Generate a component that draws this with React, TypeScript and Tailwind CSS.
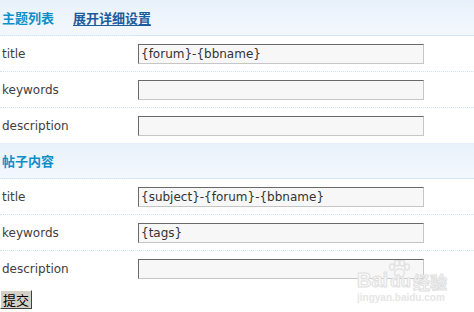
import React from "react";

const labelFont = { fontFamily: '"DejaVu Sans", Verdana, sans-serif' };
const cjk = { fontFamily: '"Noto Sans CJK SC", sans-serif' };

function Header({ children }: { children: React.ReactNode }) {
  return (
    <div className="flex h-[36px]">
      <div className="w-[133px] shrink-0 h-full bg-gradient-to-b from-[#e8f1fb] to-[#f3f8fd] border-b border-dotted border-[#cfe2f1] relative">
        <div className="absolute left-[2px] top-0 h-[35px] flex items-center whitespace-nowrap">{children}</div>
      </div>
      <div className="flex-1 h-full bg-gradient-to-b from-[#e8f1fb] to-[#f3f8fd] border-b border-solid border-[#d3e5f4]" />
    </div>
  );
}

function Row({ label, value, last }: { label: string; value?: string; last?: boolean }) {
  return (
    <div className={`flex items-center h-[36px] ${last ? "" : "border-b border-dotted border-[#cfe3f1]"}`}>
      <div className="w-[138px] shrink-0 pl-[2px] text-[12px] text-[#404040]" style={labelFont}>{label}</div>
      <div className="w-[286px] h-[20px] bg-[#f7f7f7] border-t border-l border-[#6a6a6a] border-r-[#c6c6c6] border-b-[#c6c6c6] border-r border-b flex items-center pl-[2px] text-[12px] text-[#333] whitespace-nowrap overflow-hidden" style={labelFont}>
        {value}
      </div>
    </div>
  );
}

export default function App() {
  return (
    <div className="w-[474px] h-[312px] bg-white relative overflow-hidden">
      <Header>
        <span className="text-[13px] font-bold text-[#0d90c8]" style={cjk}>主题列表</span>
        <span className="ml-[19px] text-[13px] font-bold text-[#1d5c9c] underline underline-offset-[2px]" style={cjk}>展开详细设置</span>
      </Header>
      <Row label="title" value="{forum}-{bbname}" />
      <Row label="keywords" />
      <Row label="description" last />
      <div className="-mt-[1px]">
        <Header>
          <span className="text-[13px] font-bold text-[#0d90c8]" style={cjk}>帖子内容</span>
        </Header>
      </div>
      <Row label="title" value="{subject}-{forum}-{bbname}" />
      <Row label="keywords" value="{tags}" />
      <Row label="description" last />
      <div className="mt-[3px]">
        <button
          className="w-[32px] h-[19px] bg-[#d4d0c8] border border-t-white border-l-white border-r-[#404040] border-b-[#404040] text-[13px] leading-none text-black flex items-center justify-center"
          style={cjk}
        >
          提交
        </button>
      </div>
      <div className="absolute left-[355px] top-[260px] w-[92px] h-[44px] pointer-events-none select-none">
        <svg width="24" height="18" viewBox="0 0 24 18" className="absolute left-[32px] top-[0px]">
          <g fill="none" stroke="#e2e2e2" strokeWidth="1.5">
            <ellipse cx="5" cy="7" rx="2.5" ry="3" />
            <ellipse cx="10" cy="3" rx="2.5" ry="3" />
            <ellipse cx="15" cy="3" rx="2.5" ry="3" />
            <ellipse cx="20" cy="7" rx="2.5" ry="3" />
            <ellipse cx="12.5" cy="13" rx="5" ry="4" />
          </g>
        </svg>
        <div className="absolute left-[2px] top-[10px] h-[20px] flex items-end text-[20px] font-bold leading-none" style={{ fontFamily: '"Liberation Sans", sans-serif', WebkitTextStroke: "1px #e0e0e0", color: "#fafafa" }}>
          <span>Bai</span>
          <span className="ml-[2px] text-[17px]">du</span>
          <span className="ml-[2px] text-[17px]" style={cjk}>经验</span>
        </div>
        <div className="absolute left-[2px] top-[33px] text-[10px] leading-none font-bold" style={{ fontFamily: '"Liberation Sans", sans-serif', color: "#e6e6e6" }}>jingyan.baidu.com</div>
      </div>
    </div>
  );
}
